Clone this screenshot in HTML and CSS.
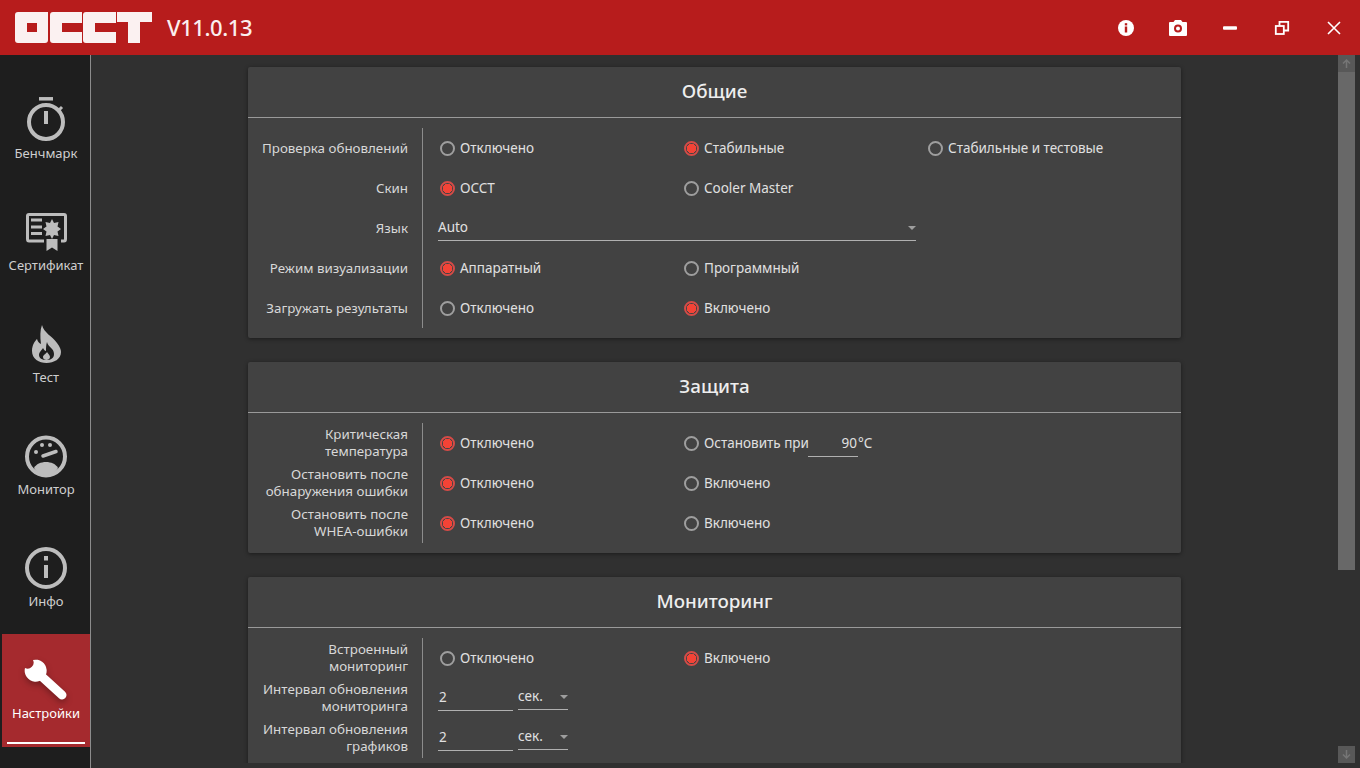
FILE: index.html
```html
<!DOCTYPE html>
<html lang="ru">
<head>
<meta charset="utf-8">
<title>OCCT</title>
<link rel="stylesheet" href="styles.css">
</head>
<body>
<div class="app">
  <header class="topbar">
    <svg class="logo" width="140" height="33" viewBox="0 0 140 33">
      <path fill-rule="evenodd" d="M3 1H33V29Q33 32 30 32H3Q0 32 0 29V4Q0 1 3 1ZM12 12V21H22V12Z"/>
      <path d="M38 1H67V12H47V21H67V32H38Q35 32 35 29V4Q35 1 38 1Z"/>
      <path d="M71 1H101V12H80V21H101V32H71Q68 32 68 29V4Q68 1 71 1Z"/>
      <path d="M102 1H137V11H125V32H113V11H102Z"/>
    </svg>
    <div class="version">V11.0.13</div>
    <div class="winbtns">
      <div class="winbtn"><svg width="18" height="18" viewBox="0 0 18 18"><circle cx="9" cy="9" r="8" fill="#fff"/><rect x="7.8" y="7.5" width="2.4" height="6" fill="#b71c1c"/><rect x="7.8" y="4.2" width="2.4" height="2.2" fill="#b71c1c"/></svg></div>
      <div class="winbtn"><svg width="20" height="18" viewBox="0 0 20 18"><path fill="#fff" fill-rule="evenodd" d="M2 3H5.5L7 1H13L14.5 3H18Q19 3 19 4V16Q19 17 18 17H2Q1 17 1 16V4Q1 3 2 3ZM10 5.5A4 4 0 1 0 10 13.5A4 4 0 1 0 10 5.5ZM10 7.5A2 2 0 1 1 10 11.500A2 2 0 1 1 10 7.5Z"/></svg></div>
      <div class="winbtn"><svg width="16" height="4" viewBox="0 0 16 4"><rect x="1" y="0.200" width="14" height="3.600" rx="1" fill="#fff"/></svg></div>
      <div class="winbtn"><svg width="16" height="16" viewBox="0 0 16 16" fill="none" stroke="#fff" stroke-width="1.800"><rect x="1.800" y="6" width="8" height="8"/><path d="M5.500 5.500V1.900H14.200V10.500H10"/></svg></div>
      <div class="winbtn"><svg width="14" height="14" viewBox="0 0 14 14" stroke="#fff" stroke-width="1.600"><path d="M1 1L13 13M13 1L1 13"/></svg></div>
    </div>
  </header>
  <div class="workspace">
    <nav class="sidebar">
      <div class="navitem">
        <svg class="navicon" viewBox="0 0 48 48" fill="none" stroke="#bdbdbd" stroke-width="4"><circle cx="24" cy="25" r="17"/><path d="M17 1.800H31" stroke-width="3.500"/><path d="M24 14V27"/><path d="M36 14L40 10" stroke-width="3"/></svg>
        <span class="navlabel">Бенчмарк</span>
      </div>
      <div class="navitem">
        <svg class="navicon" viewBox="0 0 48 48"><path fill="none" stroke="#bdbdbd" stroke-width="3" stroke-linejoin="round" d="M22 32H7Q5.500 32 5.500 30V7Q5.500 5.500 7 5.500H42Q43.500 5.500 43.500 7V30Q43.500 32 42 32H39"/><path stroke="#bdbdbd" stroke-width="3" d="M9 11H20M9 18H20M9 24.500H20"/><path fill="#bdbdbd" d="M30 10L32 14L36.500 13L35.500 17.500L39 20L35.500 22.500L36.500 27L32 26L30 30L28 26L23.500 27L24.500 22.500L21 20L24.500 17.500L23.500 13L28 14Z"/><path fill="#bdbdbd" d="M24.500 30H35.500V42L30 38.500L24.500 42Z"/></svg>
        <span class="navlabel">Сертификат</span>
      </div>
      <div class="navitem">
        <svg class="navicon" viewBox="0 0 48 48"><path fill="#bdbdbd" fill-rule="evenodd" d="M20 4C22 12 30 15 35 22C38 26 39 29 39 31C39 38 32 42 24.500 42C17 42 10 38 10 30C10 24 13 20 15 18C16 21 17 22 19 23C18 16 18 9 20 4ZM25 21C24 24 24 27 24 30C23 30 22 29 21 27C20 29 17 31 17 34C17 37 20 39 24.500 39C29 39 32 37 32 33C32 27 26 26 25 21Z"/><path fill="#bdbdbd" d="M25 31C26 33 28 34 28 36C28 38 26 39 24.500 39C22.500 39 21 38 21 36C21 34 24 33 25 31Z"/></svg>
        <span class="navlabel">Тест</span>
      </div>
      <div class="navitem">
        <svg class="navicon" viewBox="0 0 48 48"><circle cx="24" cy="23.500" r="19" fill="none" stroke="#bdbdbd" stroke-width="4"/><circle cx="20" cy="12" r="2" fill="#bdbdbd"/><circle cx="28" cy="12" r="2" fill="#bdbdbd"/><circle cx="14" cy="19" r="2" fill="#bdbdbd"/><path d="M21 23L34 18.500" stroke="#bdbdbd" stroke-width="3.500" stroke-linecap="round"/><path fill="#bdbdbd" d="M12 35C14 31 19 29 24 29C29 29 34 31 36 35C33 40 29 42 24 42C19 42 15 40 12 35Z"/></svg>
        <span class="navlabel">Монитор</span>
      </div>
      <div class="navitem">
        <svg class="navicon" viewBox="0 0 48 48"><circle cx="24" cy="23" r="19" fill="none" stroke="#bdbdbd" stroke-width="4"/><rect x="22" y="11" width="4" height="4.500" fill="#bdbdbd"/><rect x="22" y="20" width="4" height="13" fill="#bdbdbd"/></svg>
        <span class="navlabel">Инфо</span>
      </div>
      <div class="navitem active">
        <svg class="navicon" viewBox="0 0 48 48"><path fill="#fff" d="M11 3A6 6 0 0 1 3 11A11 11 0 1 0 11 3Z"/><path d="M17 17L40 38" stroke="#fff" stroke-width="9" stroke-linecap="round"/></svg>
        <span class="navlabel">Настройки</span>
      </div>
    </nav>
    <main class="content">
      <div class="scroller">
        <section class="card">
          <h2 class="cardtitle">Общие</h2>
          <div class="cardbody">
            <div class="row"><div class="label one">Проверка обновлений</div><div class="opts">
              <div class="opt"><i class="radio"></i>Отключено</div><div class="opt"><i class="radio on"></i>Стабильные</div><div class="opt"><i class="radio"></i>Стабильные и тестовые</div></div></div>
            <div class="row"><div class="label one">Скин</div><div class="opts">
              <div class="opt"><i class="radio on"></i>OCCT</div><div class="opt"><i class="radio"></i>Cooler Master</div></div></div>
            <div class="row"><div class="label one">Язык</div><div class="opts">
              <div class="select wide">Auto<i class="caret"></i></div></div></div>
            <div class="row"><div class="label one">Режим визуализации</div><div class="opts">
              <div class="opt"><i class="radio on"></i>Аппаратный</div><div class="opt"><i class="radio"></i>Программный</div></div></div>
            <div class="row"><div class="label one">Загружать результаты</div><div class="opts">
              <div class="opt"><i class="radio"></i>Отключено</div><div class="opt"><i class="radio on"></i>Включено</div></div></div>
          </div>
        </section>
        <section class="card">
          <h2 class="cardtitle">Защита</h2>
          <div class="cardbody">
            <div class="row"><div class="label">Критическая<br>температура</div><div class="opts">
              <div class="opt"><i class="radio on"></i>Отключено</div><div class="opt"><i class="radio"></i>Остановить при<span class="tempinput">90</span>°C</div></div></div>
            <div class="row"><div class="label">Остановить после<br>обнаружения ошибки</div><div class="opts">
              <div class="opt"><i class="radio on"></i>Отключено</div><div class="opt"><i class="radio"></i>Включено</div></div></div>
            <div class="row"><div class="label">Остановить после<br>WHEA-ошибки</div><div class="opts">
              <div class="opt"><i class="radio on"></i>Отключено</div><div class="opt"><i class="radio"></i>Включено</div></div></div>
          </div>
        </section>
        <section class="card">
          <h2 class="cardtitle">Мониторинг</h2>
          <div class="cardbody">
            <div class="row"><div class="label">Встроенный<br>мониторинг</div><div class="opts">
              <div class="opt"><i class="radio"></i>Отключено</div><div class="opt"><i class="radio on"></i>Включено</div></div></div>
            <div class="row"><div class="label">Интервал обновления<br>мониторинга</div><div class="opts">
              <div class="numinput">2</div><div class="select small">сек.<i class="caret"></i></div></div></div>
            <div class="row"><div class="label">Интервал обновления<br>графиков</div><div class="opts">
              <div class="numinput">2</div><div class="select small">сек.<i class="caret"></i></div></div></div>
          </div>
        </section>
      </div>
      <div class="scrollbar">
        <div class="track">
          <div class="thumb"><div class="sbtn"><svg width="9" height="9" viewBox="0 0 9 9" fill="none" stroke="#767676" stroke-width="1.500"><path d="M1 4.500L4.500 1L8 4.500M4.500 1V9"/></svg></div></div>
        </div>
        <div class="sbtn down"><svg width="9" height="9" viewBox="0 0 9 9" fill="none" stroke="#767676" stroke-width="1.500"><path d="M1 4.500L4.500 8L8 4.500M4.500 8V0"/></svg></div>
      </div>
    </main>
  </div>
</div>
</body>
</html>
```
FILE: styles.css
```css
* { box-sizing: border-box; }
html, body { margin: 0; height: 100%; overflow: hidden; }
body { background: #303030; font-family: "Noto Sans", "Open Sans", sans-serif; font-size: 13.5px; color: #e0e0e0; }
.app { width: 1360px; height: 768px; display: flex; flex-direction: column; }

.topbar { height: 55px; flex: none; background: #b71c1c; display: flex; align-items: center; padding-left: 15px; }
.logo { fill: #fbf1f1; flex: none; margin-top: -1px; }
.version { margin-left: 12px; font-size: 22px; font-weight: 500; letter-spacing: -0.4px; color: #fbeeee; line-height: 30px; margin-top: -1px; }
.winbtns { margin-left: auto; display: flex; }
.winbtn { width: 52px; height: 55px; display: flex; align-items: center; justify-content: center; }

.workspace { flex: 1; display: flex; min-height: 0; }
.sidebar { width: 91px; flex: none; background: #1e1e1e; border-right: 1px solid #8c8c8c; padding-top: 19px; padding-left: 2px; }
.navitem { height: 112px; display: flex; flex-direction: column; align-items: center; padding-top: 23px; margin-left: -2px; padding-left: 2px; color: #cfcfcf; position: relative; }
.navicon { width: 48px; height: 48px; flex: none; }
.navlabel { font-size: 13px; line-height: 17px; white-space: nowrap; }
.navitem.active { background: linear-gradient(#a52a2e, #a52a2e) no-repeat 2px 0 / 88px 100%; color: #fff; height: 113px; }
.navitem.active::after { content: ""; position: absolute; left: 7px; right: 5px; bottom: 3px; height: 2px; background: #fff; }
.navitem.active .navicon { filter: drop-shadow(0 3px 3px rgba(0,0,0,.3)); }

.content { flex: 1; display: flex; min-width: 0; }
.scroller { flex: 1; height: 708px; overflow: hidden; padding-top: 12px; display: flex; flex-direction: column; align-items: center; gap: 24px; }
.card { width: 933px; flex: none; background: #424242; border-radius: 2px; box-shadow: 0 1px 4px rgba(0,0,0,.45); }
.cardtitle { margin: 0; height: 51px; border-bottom: 1px solid #9a9a9a; font-size: 18.800px; font-weight: 500; line-height: 48px; text-align: center; color: #eeeeee; }
.cardbody { padding: 10px 0; }
.row { display: flex; height: 40px; }
.label { width: 175px; flex: none; border-right: 1px solid #8c8c8c; padding-right: 14px; text-align: right; font-size: 13.350px; line-height: 17.500px; color: #d8d8d8; display: flex; align-items: center; justify-content: flex-end; white-space: nowrap; }
.label.one { padding-top: 2px; }
.opts { flex: 1; display: flex; align-items: center; padding-left: 17px; }
.opt { width: 244px; flex: none; display: flex; align-items: center; white-space: nowrap; }
.radio { width: 15px; height: 15px; border-radius: 50%; border: 2px solid #9e9e9e; margin-right: 5px; flex: none; }
.radio.on { border-color: #d64b47; background: radial-gradient(circle, #f44336 0 4.500px, transparent 5px); }
.select { height: 26px; margin-left: -2px; border-bottom: 1px solid #b0b0b0; display: flex; align-items: center; position: relative; }
.select.wide { width: 478px; padding-bottom: 2px; }
.select.small { width: 50px; height: 24px; margin-left: 5px; padding-bottom: 3px; }
.caret { position: absolute; right: 0; top: 11px; border: 4px solid transparent; border-top: 4px solid #9e9e9e; border-bottom: 0; }
.select.small .caret { top: 9px; }
.numinput { width: 75px; height: 26px; margin-left: -2px; border-bottom: 1px solid #b0b0b0; padding-left: 1px; line-height: 24px; }
.tempinput { width: 50px; height: 28px; margin-left: -1px; padding-right: 1px; border-bottom: 1px solid #b0b0b0; text-align: right; line-height: 28px; flex: none; }
.scrollbar { width: 17px; flex: none; margin-right: 5px; height: 708px; display: flex; flex-direction: column; justify-content: space-between; }
.track { height: 515px; }
.thumb { height: 100%; background: #686868; }
.sbtn { width: 17px; height: 17px; background: #585858; display: flex; align-items: center; justify-content: center; }
```
